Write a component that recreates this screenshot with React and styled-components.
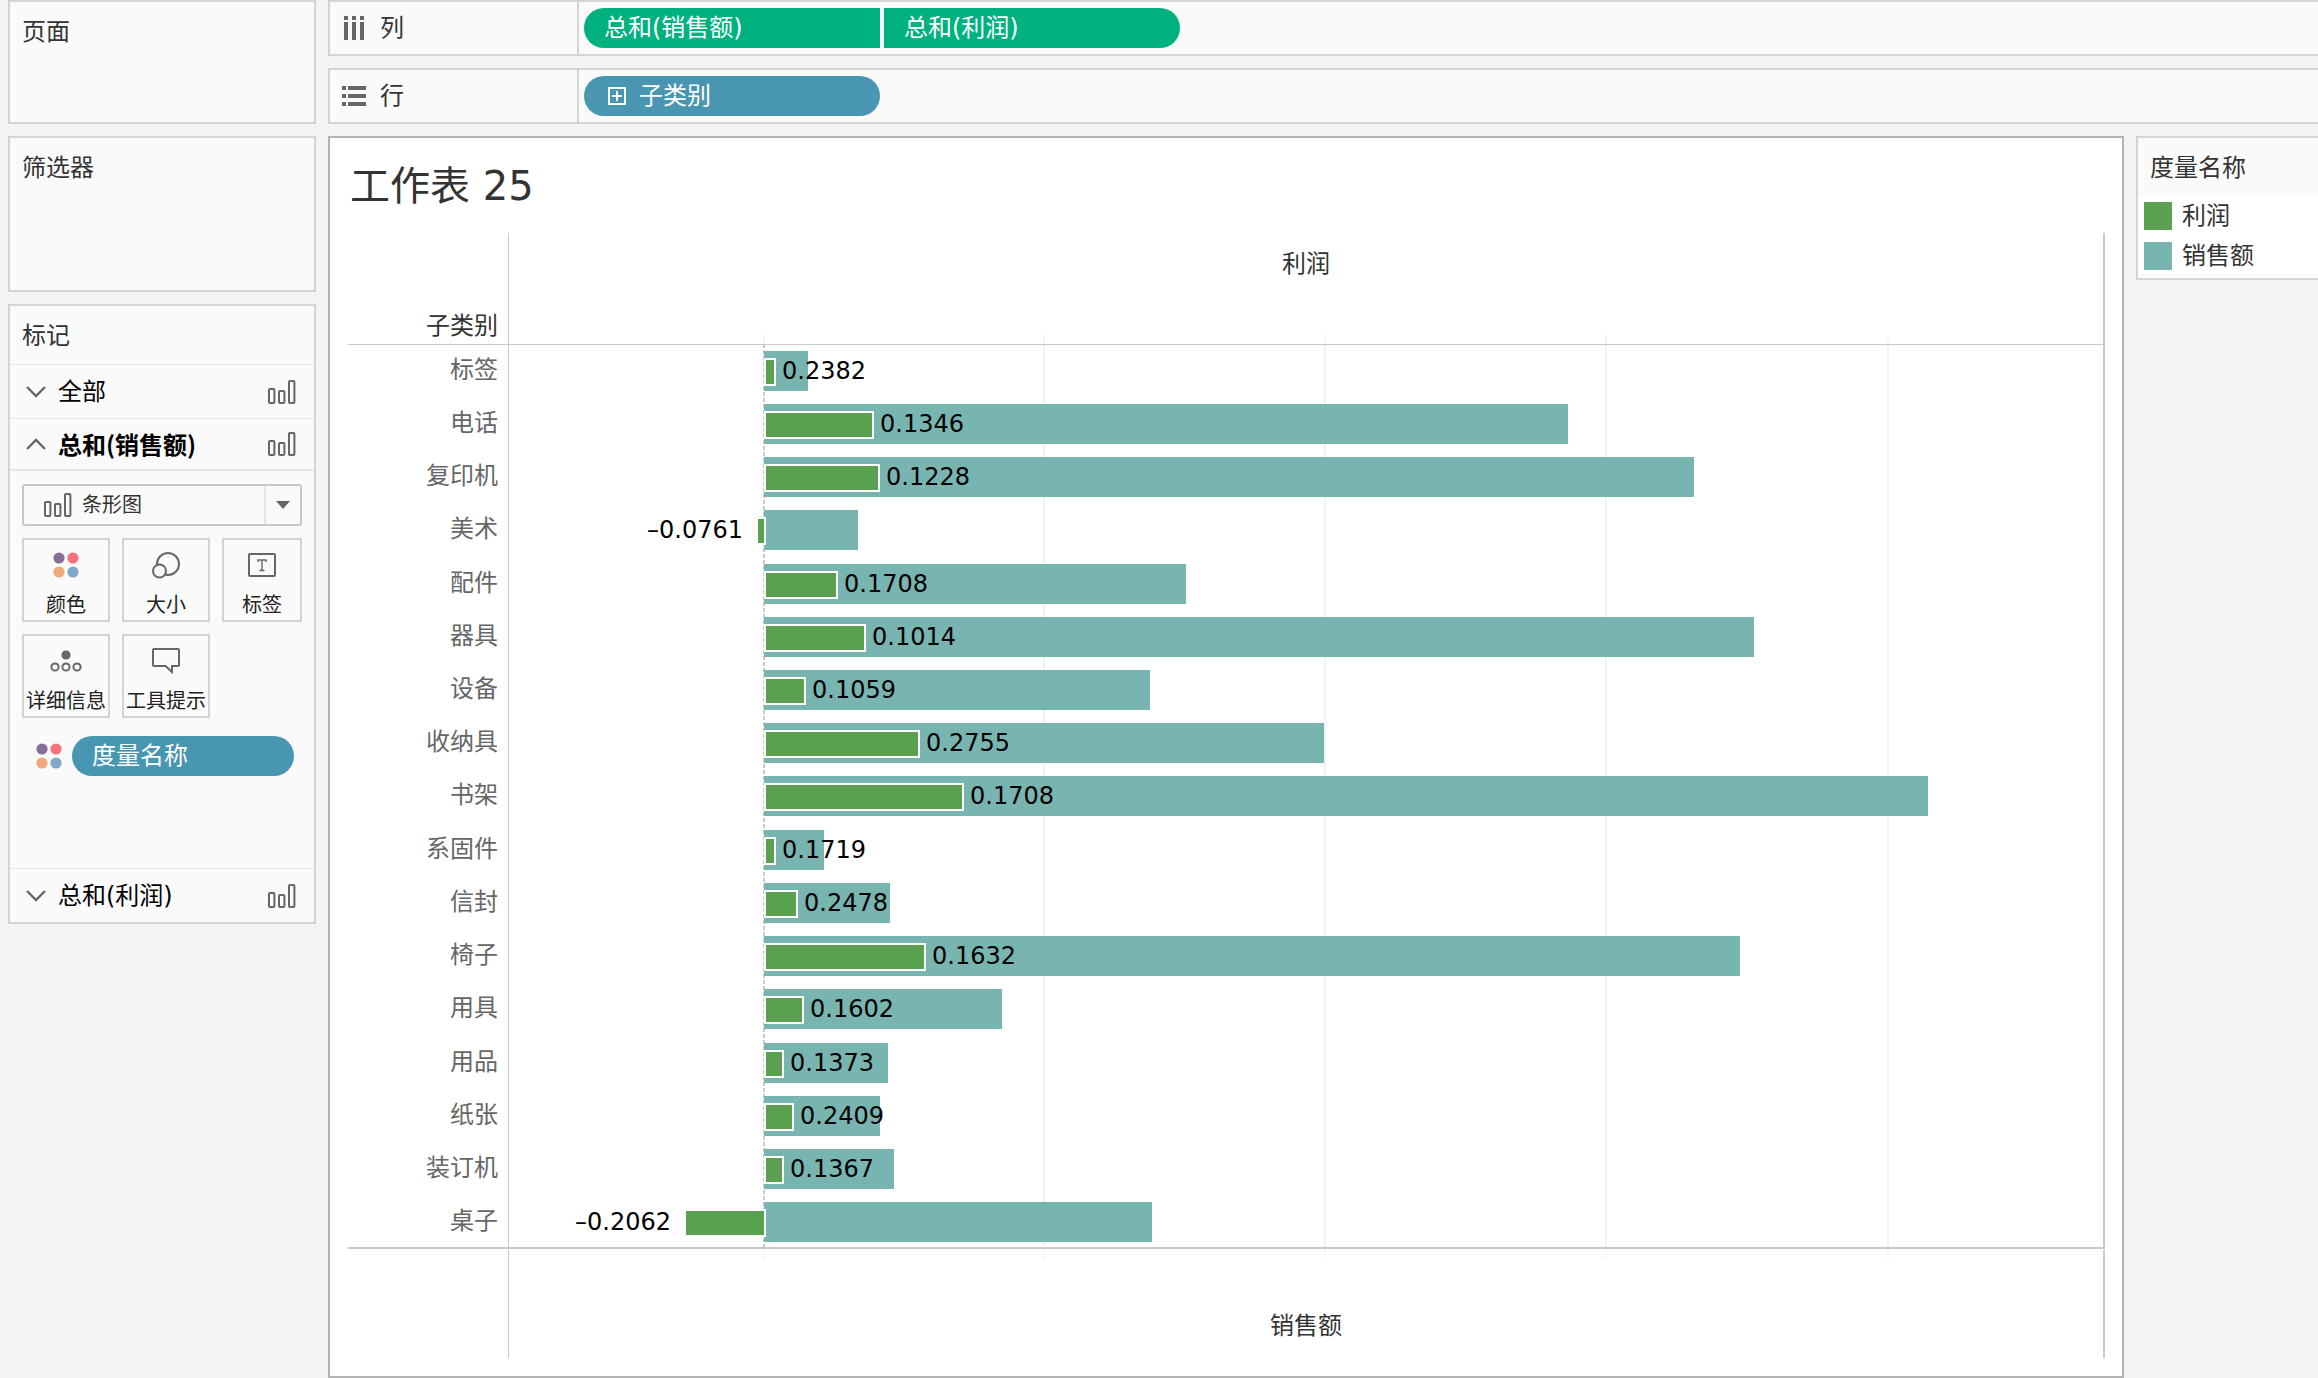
import React from 'react';
import styled, { createGlobalStyle, css } from 'styled-components';

const categories = [
    { name: '标签', sales: 44, profit: 12, label: '0.2382' },
    { name: '电话', sales: 804, profit: 110, label: '0.1346' },
    { name: '复印机', sales: 930, profit: 116, label: '0.1228' },
    { name: '美术', sales: 94, profit: -6, label: '–0.0761' },
    { name: '配件', sales: 422, profit: 74, label: '0.1708' },
    { name: '器具', sales: 990, profit: 102, label: '0.1014' },
    { name: '设备', sales: 386, profit: 42, label: '0.1059' },
    { name: '收纳具', sales: 560, profit: 156, label: '0.2755' },
    { name: '书架', sales: 1164, profit: 200, label: '0.1708' },
    { name: '系固件', sales: 60, profit: 12, label: '0.1719' },
    { name: '信封', sales: 126, profit: 34, label: '0.2478' },
    { name: '椅子', sales: 976, profit: 162, label: '0.1632' },
    { name: '用具', sales: 238, profit: 40, label: '0.1602' },
    { name: '用品', sales: 124, profit: 20, label: '0.1373' },
    { name: '纸张', sales: 116, profit: 30, label: '0.2409' },
    { name: '装订机', sales: 130, profit: 20, label: '0.1367' },
    { name: '桌子', sales: 388, profit: -78, label: '–0.2062' }
];

const DOMAIN_MIN = -255;
const DOMAIN_MAX = 1339;
const ticks = [0, 280, 561, 842, 1124];

const size = (v) => `${(v / (DOMAIN_MAX - DOMAIN_MIN)) * 100}%`;
const position = (v) => size(v - DOMAIN_MIN);

// ======  ICONS  ======

const BarsIcon = () => (
    <svg width="28" height="24" viewBox="0 0 28 24" fill="none" stroke="#666" strokeWidth="2">
        <rect x="1" y="9" width="5.4" height="14" rx="1" />
        <rect x="11" y="11" width="5.4" height="12" rx="1" />
        <rect x="21" y="1" width="5.4" height="22" rx="1" />
    </svg>
);

const ChevronIcon = ({ up }) => (
    <svg width="20" height="12" viewBox="0 0 20 12" fill="none" stroke="#666" strokeWidth="2.4">
        <path d={up ? 'M1 11 L10 2 L19 11' : 'M1 1 L10 10 L19 1'} />
    </svg>
);

const ColumnsIcon = () => (
    <svg width="24" height="24" viewBox="0 0 24 24" fill="#666">
        <path d="M2 0h4v4h-4z M10 0h4v4h-4z M18 0h4v4h-4z M2 6h4v18h-4z M10 6h4v18h-4z M18 6h4v18h-4z" />
    </svg>
);

const RowsIcon = () => (
    <svg width="24" height="20" viewBox="0 0 24 20" fill="#666">
        <path d="M0 0h4v4h-4z M0 8h4v4h-4z M0 16h4v4h-4z M6 0h18v4h-18z M6 8h18v4h-18z M6 16h18v4h-18z" />
    </svg>
);

const ExpandIcon = () => (
    <svg width="18" height="18" viewBox="0 0 18 18" fill="none" stroke="#fff" strokeWidth="2">
        <path d="M1 1h16v16h-16z M4 9h10 M9 4v10" />
    </svg>
);

const DotsIcon = () => (
    <svg width="26" height="26" viewBox="0 0 26 26">
        <circle cx="6" cy="6" r="5.6" fill="#866f96" />
        <circle cx="20" cy="6" r="5.6" fill="#f9707f" />
        <circle cx="6" cy="20" r="5.6" fill="#f3a77c" />
        <circle cx="20" cy="20" r="5.6" fill="#82a5cc" />
    </svg>
);

const SizeIcon = () => (
    <svg width="28" height="28" viewBox="0 0 28 28" fill="none" stroke="#666" strokeWidth="2">
        <circle cx="16" cy="13" r="11" />
        <circle cx="7.5" cy="20" r="6.5" fill="#fafafa" />
    </svg>
);

const TextIcon = () => (
    <svg width="28" height="26" viewBox="0 0 28 26" fill="none" stroke="#666" strokeWidth="2">
        <rect x="1" y="2" width="26" height="22" rx="1" />
        <path d="M10 10 V8 H18 V10 M14 8 V18.5 M11.5 18.5 H16.5" strokeWidth="1.4" />
    </svg>
);

const DetailIcon = () => (
    <svg width="32" height="22" viewBox="0 0 32 22" fill="none" stroke="#666" strokeWidth="2">
        <circle cx="16" cy="5" r="4.6" fill="#666" stroke="none" />
        <circle cx="5" cy="17" r="3.6" />
        <circle cx="16" cy="17" r="3.6" />
        <circle cx="27" cy="17" r="3.6" />
    </svg>
);

const TooltipIcon = () => (
    <svg width="28" height="26" viewBox="0 0 28 26" fill="none" stroke="#666" strokeWidth="2">
        <path d="M2 1 H26 Q27 1 27 2 V17 Q27 18 26 18 H20 V24 L13.5 18 H2 Q1 18 1 17 V2 Q1 1 2 1 Z" />
    </svg>
);

const markCards = [
    { title: '颜色', icon: <DotsIcon /> },
    { title: '大小', icon: <SizeIcon /> },
    { title: '标签', icon: <TextIcon /> },
    { title: '详细信息', icon: <DetailIcon /> },
    { title: '工具提示', icon: <TooltipIcon /> }
];

// ======  COMPONENTS  ======

const MarkRow = ({ title, open }) => (
    <MarkRowButton type="button" aria-expanded={!!open} $open={open}>
        <ChevronIcon up={open} />
        <MarkRowTitle $open={open}>{title}</MarkRowTitle>
        <BarsIcon />
    </MarkRowButton>
);

const Sidebar = () => (
    <Side>
        <Card $height={124}>
            <CardTitle>页面</CardTitle>
        </Card>
        <Card $height={156}>
            <CardTitle>筛选器</CardTitle>
        </Card>
        <Card>
            <CardTitle>标记</CardTitle>
            <MarkRow title="全部" />
            <MarkRow title="总和(销售额)" open />
            <MarksBody>
                <SelectBox>
                    <BarsIcon />
                    <Select aria-label="标记类型" defaultValue="bar">
                        <option value="bar">条形图</option>
                    </Select>
                    <SelectArrow>
                        <svg width="14" height="8" viewBox="0 0 14 8" fill="#666">
                            <path d="M0 0h14l-7 8z" />
                        </svg>
                    </SelectArrow>
                </SelectBox>
                <MarkGrid>
                    {markCards.map((card) => (
                        <MarkButton type="button" key={card.title}>
                            <MarkIcon>{card.icon}</MarkIcon>
                            {card.title}
                        </MarkButton>
                    ))}
                </MarkGrid>
                <Encoding>
                    <DotsIcon />
                    <EncodingPill type="button">度量名称</EncodingPill>
                </Encoding>
            </MarksBody>
            <MarkRow title="总和(利润)" />
        </Card>
    </Side>
);

const Shelves = () => (
    <ShelfList>
        <Shelf>
            <ShelfLabel>
                <ColumnsIcon />
                列
            </ShelfLabel>
            <Pill type="button" $join="right">总和(销售额)</Pill>
            <Pill type="button" $join="left">总和(利润)</Pill>
        </Shelf>
        <Shelf>
            <ShelfLabel>
                <RowsIcon />
                行
            </ShelfLabel>
            <Pill type="button" $blue>
                <ExpandIcon />
                子类别
            </Pill>
        </Shelf>
    </ShelfList>
);

const Worksheet = () => (
    <Sheet>
        <SheetTitle>工作表 25</SheetTitle>
        <ChartHeader>
            <FieldName>子类别</FieldName>
            <AxisCell>
                利润
                {ticks.map((t) => (
                    <Stub key={t} $side="bottom" style={{ left: position(t) }} />
                ))}
            </AxisCell>
        </ChartHeader>
        <ChartBody>
            <Labels>
                {categories.map((c) => (
                    <Label key={c.name}>{c.name}</Label>
                ))}
            </Labels>
            <Plot>
                {ticks.map((t) => (
                    <GridLine key={t} $zero={t === 0} style={{ left: position(t) }} />
                ))}
                {categories.map((c) => (
                    <BarRow key={c.name}>
                        <SalesBar style={{ left: position(0), width: size(c.sales) }} />
                        {c.profit < 0 ? (
                            <>
                                <ProfitBar
                                    $negative
                                    style={{ left: position(c.profit), width: `calc(${size(-c.profit)} + 4px)` }}
                                />
                                <Value $negative style={{ right: size(DOMAIN_MAX - c.profit) }}>{c.label}</Value>
                            </>
                        ) : (
                            <>
                                <ProfitBar style={{ left: position(0), width: size(c.profit) }} />
                                <Value style={{ left: position(c.profit) }}>{c.label}</Value>
                            </>
                        )}
                    </BarRow>
                ))}
            </Plot>
        </ChartBody>
        <ChartFooter>
            <div />
            <AxisCell $footer>
                销售额
                {ticks.map((t) => (
                    <Stub key={t} $side="top" style={{ left: position(t) }} />
                ))}
            </AxisCell>
        </ChartFooter>
    </Sheet>
);

const App = () => (
    <Page>
        <GlobalStyle />
        <Sidebar />
        <Main>
            <Shelves />
            <Content>
                <Worksheet />
                <Legend>
                    <CardTitle>度量名称</CardTitle>
                    <LegendList>
                        <LegendItem>
                            <Swatch $color="#59a14f" />
                            利润
                        </LegendItem>
                        <LegendItem>
                            <Swatch $color="#78b5b0" />
                            销售额
                        </LegendItem>
                    </LegendList>
                </Legend>
            </Content>
        </Main>
    </Page>
);

// ======  STYLES  ======

const GlobalStyle = createGlobalStyle`
    * {
        box-sizing: border-box;
    }

    body {
        margin: 0;
        background-color: #f4f4f4;
        color: #333;
        font-family: 'DejaVu Sans', 'Noto Sans CJK SC', sans-serif;
        font-size: 24px;
        line-height: 32px;
    }

    button,
    select {
        font: inherit;
        margin: 0;
        padding: 0;
        border: none;
        background: none;
        cursor: pointer;
    }

    svg {
        display: block;
        flex: none;
    }
`;

const Page = styled.div`
    display: grid;
    grid-template-columns: 308px minmax(0, 1fr);
    column-gap: 12px;
    min-height: 100vh;
    padding-left: 8px;
    overflow: hidden;
`;

const Side = styled.aside`
    display: flex;
    flex-direction: column;
    gap: 12px;
`;

const Card = styled.section`
    min-height: ${(p) => p.$height || 0}px;
    border: 2px solid #d4d4d4;
    background-color: #fafafa;
`;

const CardTitle = styled.h2`
    margin: 0;
    padding: 14px 12px 12px;
    font-size: 24px;
    font-weight: 400;
    line-height: 32px;
`;

const MarkRowButton = styled.button`
    display: flex;
    align-items: center;
    gap: 12px;
    width: 100%;
    height: ${(p) => (p.$open ? 51 : 54)}px;
    padding: 0 18px 0 16px;
    border-top: 1px solid #e6e6e6;
    color: #000;
    text-align: left;
`;

const MarkRowTitle = styled.span`
    flex: 1;
    ${(p) =>
        p.$open &&
        css`
            font-family: 'Noto Sans CJK SC', sans-serif;
            font-weight: 700;
        `}
`;

const MarksBody = styled.div`
    min-height: 399px;
    padding: 13px 12px;
    border-top: 2px solid #e6e6e6;
`;

const SelectBox = styled.div`
    position: relative;
    display: flex;
    align-items: center;
    height: 42px;
    border: 2px solid #c8c8c8;
    border-radius: 3px;

    & > svg {
        margin-left: 20px;
        pointer-events: none;
    }
`;

const Select = styled.select`
    position: absolute;
    inset: 0;
    width: 100%;
    padding-left: 58px;
    appearance: none;
    color: #333;
    font-size: 20px;
    line-height: 28px;
`;

const SelectArrow = styled.span`
    display: flex;
    align-items: center;
    justify-content: center;
    align-self: stretch;
    width: 36px;
    margin-left: auto;
    border-left: 2px solid #e6e6e6;
    pointer-events: none;
`;

const MarkGrid = styled.div`
    display: grid;
    grid-template-columns: 88px 88px 1fr;
    grid-auto-rows: 84px;
    gap: 12px;
    margin-top: 12px;
`;

const MarkButton = styled.button`
    display: flex;
    flex-direction: column;
    align-items: center;
    padding-top: 11px;
    border: 2px solid #d4d4d4;
    color: #222;
    font-size: 20px;
    line-height: 28px;
    white-space: nowrap;
`;

const MarkIcon = styled.span`
    display: flex;
    align-items: center;
    height: 28px;
    margin-bottom: 12px;
`;

const Encoding = styled.div`
    display: flex;
    align-items: center;
    gap: 10px;
    margin-top: 18px;
    padding: 0 8px 0 14px;
`;

const Pill = styled.button`
    display: flex;
    align-items: center;
    gap: 13px;
    width: 296px;
    height: 40px;
    margin-right: 4px;
    padding: 0 20px;
    border-radius: 20px;
    background-color: ${(p) => (p.$blue ? '#4996b2' : '#00b180')};
    color: #fff;

    ${(p) => p.$join === 'right' && 'border-radius: 20px 1px 1px 20px;'}
    ${(p) => p.$join === 'left' && 'border-radius: 1px 20px 20px 1px;'}

    & > svg {
        margin-left: 4px;
    }
`;

const EncodingPill = styled(Pill).attrs({ $blue: true })`
    flex: 1;
    width: auto;
    margin: 0;
`;

const Main = styled.main`
    display: flex;
    flex-direction: column;
`;

const ShelfList = styled.div`
    display: flex;
    flex-direction: column;
    gap: 12px;
`;

const Shelf = styled.div`
    display: flex;
    align-items: center;
    height: 56px;
    border: 2px solid #d4d4d4;
    border-right: none;
    background-color: #fafafa;
`;

const ShelfLabel = styled.div`
    display: flex;
    align-items: center;
    gap: 14px;
    align-self: stretch;
    width: 249px;
    margin-right: 5px;
    padding-left: 12px;
    border-right: 2px solid #d4d4d4;
`;

const Content = styled.div`
    display: flex;
    align-items: flex-start;
    flex: 1;
    gap: 12px;
    margin-top: 12px;
`;

const Sheet = styled.section`
    display: flex;
    flex-direction: column;
    align-self: stretch;
    flex: 1;
    padding: 0 17px 18px 18px;
    border: 2px solid #b3b3b3;
    background-color: #fff;
`;

const SheetTitle = styled.h1`
    margin: 0;
    padding: 20px 2px 19px;
    font-size: 40px;
    font-weight: 400;
    line-height: 56px;
`;

const chartColumns = css`
    display: grid;
    grid-template-columns: 160px minmax(0, 1fr);
`;

const ChartHeader = styled.div`
    ${chartColumns}
    height: 111px;
`;

const FieldName = styled.div`
    align-self: end;
    padding: 0 10px 2px 0;
    text-align: right;
`;

const AxisCell = styled.div`
    position: relative;
    padding-top: ${(p) => (p.$footer ? 60 : 15)}px;
    border-left: 1px solid #c9c9c9;
    border-right: 2px solid #c9c9c9;
    text-align: center;
`;

const Stub = styled.i`
    position: absolute;
    ${(p) => p.$side}: 0;
    width: 2px;
    height: 9px;
    margin-left: -1px;
    background-color: #f6f6f6;
`;

const ChartBody = styled.div`
    ${chartColumns}
    position: relative;
    flex: 1;

    &::after {
        content: '';
        position: absolute;
        inset: 0;
        border-top: 1px solid #c9c9c9;
        border-bottom: 2px solid #c9c9c9;
        pointer-events: none;
    }
`;

const Labels = styled.div`
    display: flex;
    flex-direction: column;
    color: #666;
`;

const Label = styled.div`
    display: flex;
    flex: 1;
    align-items: center;
    justify-content: flex-end;
    padding: 0 10px 2px 0;
`;

const Plot = styled.div`
    position: relative;
    display: flex;
    flex-direction: column;
    border-left: 1px solid #c9c9c9;
    border-right: 2px solid #c9c9c9;
`;

const GridLine = styled.i`
    position: absolute;
    top: 0;
    bottom: 0;
    width: 2px;
    margin-left: -1px;
    background: ${(p) =>
        p.$zero ? 'repeating-linear-gradient(#c9c9c9 0 4px, transparent 4px 6px)' : '#f2f2f2'};
`;

const BarRow = styled.div`
    position: relative;
    flex: 1;
`;

const SalesBar = styled.div`
    position: absolute;
    top: calc(50% - 20px);
    height: 40px;
    background-color: #78b5b0;
`;

const ProfitBar = styled.div`
    position: absolute;
    top: calc(50% - 13px);
    height: 28px;
    margin-left: ${(p) => (p.$negative ? -2 : 0)}px;
    border: 2px solid #fff;
    background-color: #59a14f;
`;

const Value = styled.span`
    position: absolute;
    top: calc(50% - 16px);
    padding: ${(p) => (p.$negative ? '0 15px 0 0' : '0 0 0 6px')};
    color: #000;
    white-space: nowrap;
`;

const ChartFooter = styled.div`
    ${chartColumns}
    height: 108px;
    margin-top: 1px;
`;

const Legend = styled.aside`
    width: 182px;
    border: 2px solid #d4d4d4;
    border-right: none;
    background-color: #fafafa;
`;

const LegendList = styled.ul`
    margin: 0;
    padding: 0 0 2px;
    background-color: #fff;
    list-style: none;
`;

const LegendItem = styled.li`
    display: flex;
    align-items: center;
    gap: 10px;
    height: 40px;
    padding-left: 6px;
    line-height: 34px;
`;

const Swatch = styled.span`
    width: 28px;
    height: 28px;
    background-color: ${(p) => p.$color};
`;

export default App;
